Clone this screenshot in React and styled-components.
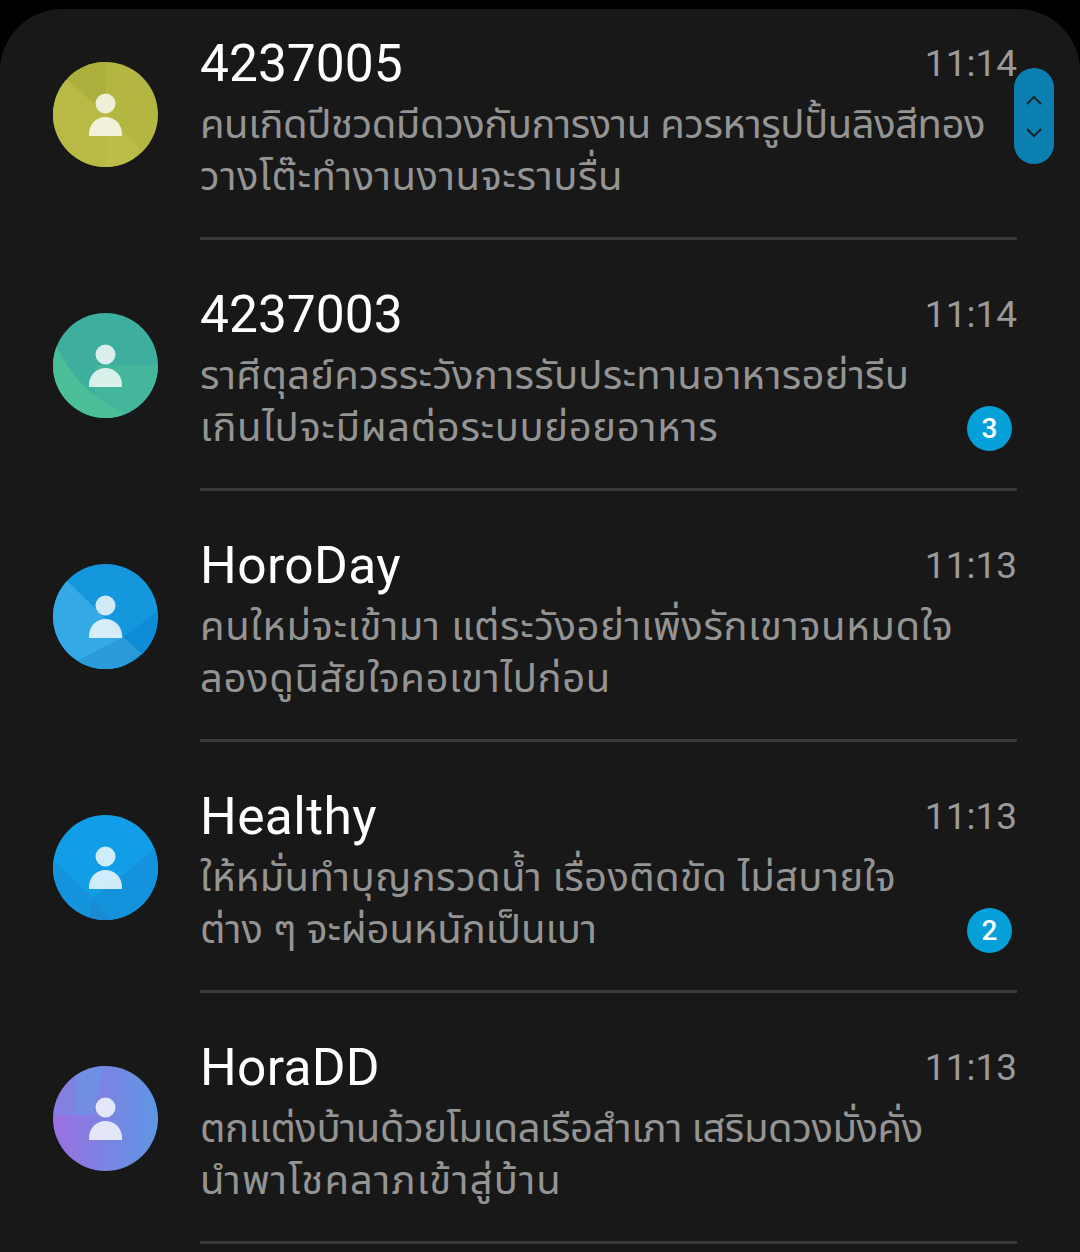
import React from "react";
import styled, { createGlobalStyle } from "styled-components";

const GlobalStyle = createGlobalStyle`
  html, body {
    margin: 0;
    padding: 0;
    background: #000000;
  }
  body {
    font-family: Roboto, "Noto Sans", "Noto Sans Thai", "Liberation Sans", sans-serif;
  }
`;

const Screen = styled.div`
  position: relative;
  width: 1080px;
  height: 1252px;
  padding-top: 9px;
  box-sizing: border-box;
  overflow: hidden;
  background: #000000;
`;

const Panel = styled.div`
  height: 100%;
  background: #181818;
  border-radius: 62px 62px 0 0;
`;

const Row = styled.div`
  display: flex;
  align-items: center;
  height: 251px;
  box-sizing: border-box;
  padding-left: 53px;

  &:first-child {
    height: 231px;
  }
`;

const Avatar = styled.svg`
  flex: none;
  width: 105px;
  height: 105px;
  margin-right: 42px;
  margin-top: ${({ $first }) => ($first ? "-20px" : "0")};
`;

const Body = styled.div`
  align-self: stretch;
  width: 817px;
  display: flex;
  flex-direction: column;
  border-bottom: 3px solid #393939;
  box-sizing: border-box;
  padding-top: ${({ $first }) => ($first ? "25px" : "45px")};
`;

const Head = styled.div`
  display: flex;
  justify-content: space-between;
  align-items: center;
  height: 60px;
`;

const Title = styled.div`
  color: #ffffff;
  font-size: 51.5px;
  line-height: 60px;
  letter-spacing: ${({ $track }) => $track}px;
  white-space: nowrap;
`;

const Time = styled.div`
  color: #9a9a9a;
  font-size: 37px;
  line-height: 60px;
`;

const Foot = styled.div`
  display: flex;
  justify-content: space-between;
  align-items: flex-end;
  margin-top: 5px;
`;

const Preview = styled.div`
  color: #949494;
  font-size: 40px;
  line-height: 52px;
`;

const Line = styled.div`
  white-space: nowrap;
  letter-spacing: ${({ $track }) => $track}px;
`;

const Badge = styled.div`
  flex: none;
  width: 45px;
  height: 45px;
  margin: 0 5px 3px 0;
  border-radius: 50%;
  background: #05a0d8;
  color: #ffffff;
  font-size: 28px;
  font-weight: 500;
  line-height: 45px;
  text-align: center;
`;

const ScrollHandle = styled.div`
  position: absolute;
  left: 1014px;
  top: 68px;
  width: 40px;
  height: 96px;
  border-radius: 20px;
  background: #0a7fb0;
  display: flex;
  flex-direction: column;
  align-items: center;
  justify-content: center;
  gap: 23px;
`;

const Chevron = styled.svg`
  width: 16px;
  height: 10px;
  fill: none;
  stroke: #14252e;
  stroke-width: 2;
`;

const facets = {
  olive: {
    base: "#b3b641",
    shapes: [
      { d: "M52.5 52.5L15 18L15 0H52.5Z", fill: "#abaf3b" },
      { d: "M52.5 52.5L15 18L-5 18V110H52.5Z", fill: "#b8ba45" },
      { d: "M52.5 52.5L88 88L70 110H52.5Z", fill: "#bcbd48" },
    ],
  },
  green: {
    base: "#3eae9f",
    shapes: [
      { d: "M42 52H110V110H60L42 90Z", fill: "#43b69b" },
      { d: "M3 33C20 66 42 88 70 99L60 110H-5V33Z", fill: "#4cbf9a" },
    ],
  },
  blue: {
    base: "#1497dd",
    shapes: [
      { d: "M13 16L88 89L60 110H-5V16Z", fill: "#34a9e6" },
      { d: "M20 99L70 73L88 89L60 110H20Z", fill: "#2a9ad8" },
      { d: "M70 73L104 48V110H88V89Z", fill: "#0e8cd6" },
    ],
  },
  sky: {
    base: "#119ee6",
    shapes: [
      { d: "M0 45L40 82L60 110H-5Z", fill: "#1494dd" },
      { d: "M40 82L70 60L105 30V110H60Z", fill: "#1492dc" },
      { d: "M40 82L60 110H35Z", fill: "#1a8ad2" },
    ],
  },
  violet: {
    gradient: ["#9b70e0", "#5d97e4"],
    shapes: [
      { d: "M-5 49H40L52 -5H-5Z", fill: "#5f9ae6", opacity: 0.3 },
      { d: "M22 49H40L52 -5H22Z", fill: "#5f9ae6", opacity: 0.4 },
    ],
  },
};

function PersonAvatar({ tone, first }) {
  const { base, gradient, shapes } = facets[tone];
  const clipId = `clip-${tone}`;
  const gradId = `grad-${tone}`;

  return (
    <Avatar viewBox="0 0 105 105" $first={first}>
      <defs>
        <clipPath id={clipId}>
          <circle cx="52.5" cy="52.5" r="52.5" />
        </clipPath>
        {gradient && (
          <linearGradient id={gradId}>
            <stop offset="0" stopColor={gradient[0]} />
            <stop offset="1" stopColor={gradient[1]} />
          </linearGradient>
        )}
      </defs>
      <g clipPath={`url(#${clipId})`}>
        <rect width="105" height="105" fill={gradient ? `url(#${gradId})` : base} />
        {shapes.map(shape => (
          <path key={shape.d} {...shape} />
        ))}
      </g>
      <g fill="#ffffff" fillOpacity="0.8">
        <circle cx="52.5" cy="41.5" r="10" />
        <path d="M36 74V71.5A16.5 16.5 0 0 1 69 71.5V74Z" />
      </g>
    </Avatar>
  );
}

const messages = [
  {
    title: "4237005",
    titleTrack: 0,
    time: "11:14",
    tone: "olive",
    lines: [
      { text: "คนเกิดปีชวดมีดวงกับการงาน ควรหารูปปั้นลิงสีทอง", track: -0.47 },
      { text: "วางโต๊ะทำงานงานจะราบรื่น", track: 0.55 },
    ],
  },
  {
    title: "4237003",
    titleTrack: 0,
    time: "11:14",
    tone: "green",
    badge: 3,
    lines: [
      { text: "ราศีตุลย์ควรระวังการรับประทานอาหารอย่ารีบ", track: 0.22 },
      { text: "เกินไปจะมีผลต่อระบบย่อยอาหาร", track: 0.64 },
    ],
  },
  {
    title: "HoroDay",
    titleTrack: 0.4,
    time: "11:13",
    tone: "blue",
    lines: [
      { text: "คนใหม่จะเข้ามา แต่ระวังอย่าเพิ่งรักเขาจนหมดใจ", track: 0.58 },
      { text: "ลองดูนิสัยใจคอเขาไปก่อน", track: 0.62 },
    ],
  },
  {
    title: "Healthy",
    titleTrack: 0.4,
    time: "11:13",
    tone: "sky",
    badge: 2,
    lines: [
      { text: "ให้หมั่นทำบุญกรวดน้ำ เรื่องติดขัด ไม่สบายใจ", track: 0.37 },
      { text: "ต่าง ๆ จะผ่อนหนักเป็นเบา", track: -0.1 },
    ],
  },
  {
    title: "HoraDD",
    titleTrack: 0.3,
    time: "11:13",
    tone: "violet",
    lines: [
      { text: "ตกแต่งบ้านด้วยโมเดลเรือสำเภา เสริมดวงมั่งคั่ง", track: -0.46 },
      { text: "นำพาโชคลาภเข้าสู่บ้าน", track: 1.15 },
    ],
  },
];

export default function App() {
  return (
    <Screen>
      <GlobalStyle />
      <Panel>
        {messages.map((message, index) => (
          <Row key={message.title}>
            <PersonAvatar tone={message.tone} first={index === 0} />
            <Body $first={index === 0}>
              <Head>
                <Title $track={message.titleTrack}>{message.title}</Title>
                <Time>{message.time}</Time>
              </Head>
              <Foot>
                <Preview>
                  {message.lines.map(line => (
                    <Line key={line.text} $track={line.track}>
                      {line.text}
                    </Line>
                  ))}
                </Preview>
                {message.badge && <Badge>{message.badge}</Badge>}
              </Foot>
            </Body>
          </Row>
        ))}
      </Panel>
      <ScrollHandle>
        <Chevron viewBox="0 0 16 10">
          <path d="M1 9L8 2L15 9" />
        </Chevron>
        <Chevron viewBox="0 0 16 10">
          <path d="M1 1L8 8L15 1" />
        </Chevron>
      </ScrollHandle>
    </Screen>
  );
}
